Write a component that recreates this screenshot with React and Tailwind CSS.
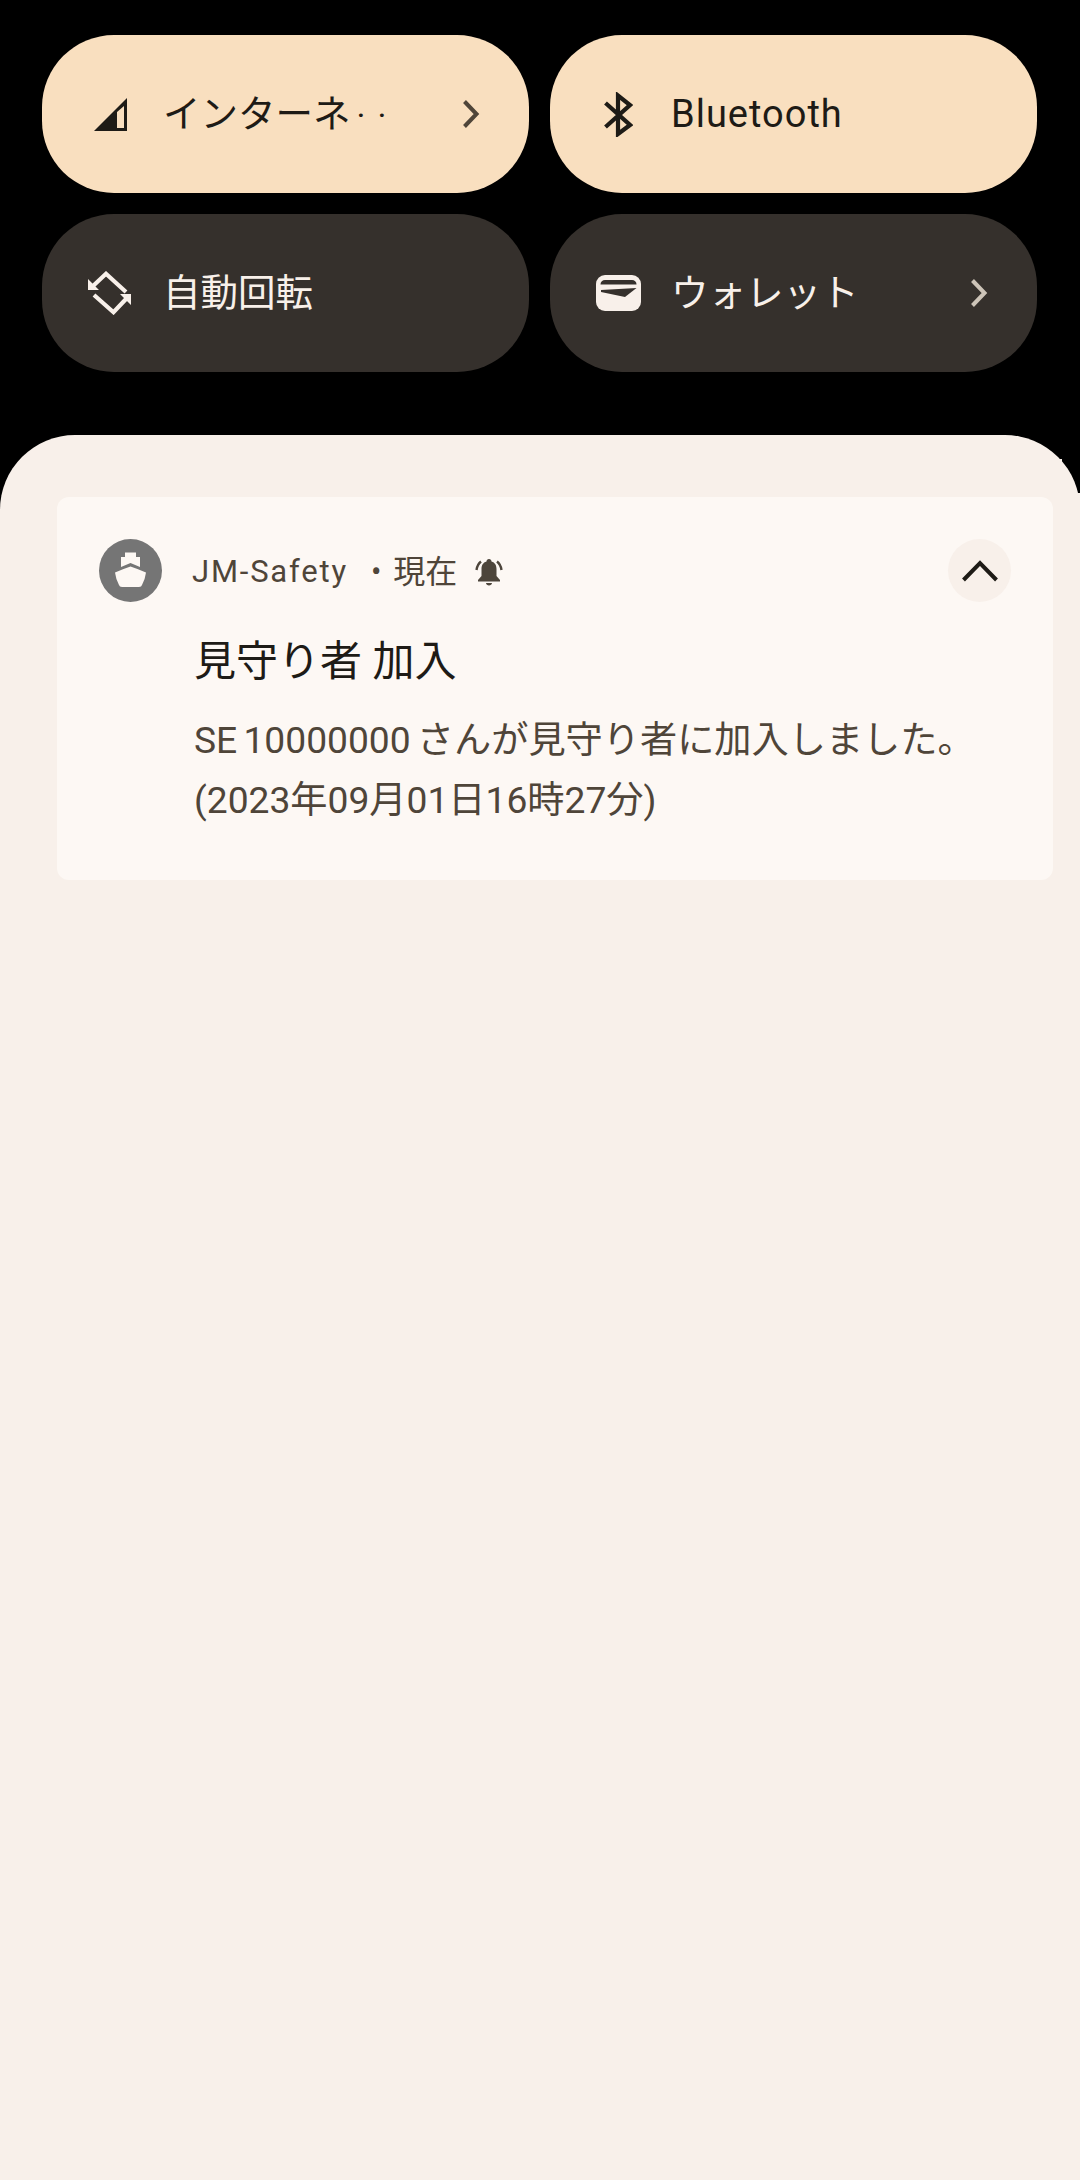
const Chevron = ({ color }) => (
  <svg width="18" height="28" viewBox="0 0 18 28" className="shrink-0" fill="none" stroke={color} strokeWidth="4">
    <path d="M2.5 1.5 L14.5 14 L2.5 26.5" />
  </svg>
);

const IconBox = ({ children }) => (
  <div className="w-[60px] shrink-0 flex items-center justify-center">{children}</div>
);

const Signal = () => (
  <svg width="33" height="33" viewBox="0 0 33 33">
    <path fillRule="evenodd" fill="#1e1b16" d="M0 33 L33 0 V33 Z M23 14 V30 H30 V8 Z" />
  </svg>
);

const Bluetooth = () => (
  <svg width="29" height="45" viewBox="0 0 29 45" fill="none" stroke="#1e1b16" strokeWidth="4.2">
    <path d="M1.5 11 L26 33 L14 42 V3.5 L26 13 L1.5 35" />
  </svg>
);

const Rotate = () => (
  <svg width="44" height="44" viewBox="0 0 44 44">
    <g fill="none" stroke="#f8f0ea" strokeWidth="4.2">
      <path d="M38 21 L18 2.800 L5 15" />
      <path d="M6 24 L25.500 41.200 L38 28" />
    </g>
    <path fill="#f8f0ea" d="M0 8 V19 H11 Z M43 23 V34 L32 23 Z" />
  </svg>
);

const Wallet = () => (
  <svg width="45" height="36" viewBox="0 0 45 36">
    <rect width="45" height="36" rx="9" fill="#f8f0ea" />
    <path fill="#35302c" d="M4.500 9.500 C4.500 6.500 6.500 5 9 5 H36 C38.500 5 40.500 6.500 40.500 9.500 Z" />
    <path fill="#35302c" d="M5 15 L40.500 13 L29 22 L5 17 Z" />
  </svg>
);

const Ship = () => (
  <svg width="63" height="63" viewBox="0 0 63 63">
    <circle cx="31.500" cy="31.500" r="31.500" fill="#757575" />
    <path fill="#fdf8f4" d="M26 13.500 H37 V18 H41 V28 L31.500 24 L22 28 V18 H26 Z" />
    <path fill="#fdf8f4" d="M16 33.500 Q24 30 31.500 27.500 Q39 30 47 33.500 Q46 41 43 46 Q42.500 48 40 48 H23 Q20.500 48 20 46 Q17 41 16 33.500 Z" />
  </svg>
);

const Bell = () => (
  <svg width="28" height="27" viewBox="0 0 28 27">
    <path fill="#4d453b" d="M14 0 C15.500 0 16.500 1 16.500 2.500 C20 3.500 21.500 6.500 21.500 10 V17 L25 21 V22.500 H3 V21 L6.500 17 V10 C6.500 6.500 8 3.500 11.500 2.500 C11.500 1 12.500 0 14 0 Z M11 24 H17 C17 25.500 15.500 26.500 14 26.500 C12.500 26.500 11 25.500 11 24 Z" />
    <g fill="none" stroke="#4d453b" strokeWidth="2.4">
      <path d="M1.500 11 C2 7.500 3.500 4.500 6 2.500" />
      <path d="M26.500 11 C26 7.500 24.500 4.500 22 2.500" />
    </g>
  </svg>
);

const Tile = ({ on, icon, children, chevron }) => (
  <div
    className={`h-[158px] rounded-[72px] flex items-center pl-[38px] pr-[49px] ${
      on ? "bg-[#f9dfbf] text-[#1e1b16]" : "bg-[#35302c] text-[#f8f0ea]"
    }`}
  >
    <IconBox>{icon}</IconBox>
    <span className="ml-[23px] flex-1 text-[37.5px] leading-[44px] whitespace-nowrap">{children}</span>
    {chevron && <Chevron color={on ? "#4f4539" : "#cdc4b8"} />}
  </div>
);

export default function App() {
  return (
    <div className="h-[2180px] w-[1080px] bg-black flex flex-col overflow-hidden font-['Roboto','Noto_Sans_CJK_JP',sans-serif]">
      <div className="grid grid-cols-2 gap-x-[21px] gap-y-[21px] pt-[35px] pl-[42px] pr-[43px]">
        <Tile on icon={<Signal />} chevron>
          インターネ<span className="tracking-[12px] ml-[6px] text-[34px]">··</span>
        </Tile>
        <Tile on icon={<Bluetooth />}>
          <span className="text-[38px] tracking-[1px]">Bluetooth</span>
        </Tile>
        <Tile icon={<Rotate />}>自動回転</Tile>
        <Tile icon={<Wallet />} chevron>ウォレット</Tile>
      </div>

      <div className="relative mt-[63px] flex-1 rounded-t-[75px] bg-[#f8f0ea] pt-[62px] pl-[57px] pr-[27px]">
        <div className="absolute top-[24px] right-[18px] w-[6px] h-[8px] bg-[#f8f0ea]" />
        <div className="absolute top-[58px] right-0 w-[4px] h-[20px] bg-[#f8f0ea]" />

        <div className="h-[383px] rounded-[12px] bg-[#fdf8f4] pt-[42px] pl-[42px] pr-[42px]">
          <div className="flex items-center h-[63px]">
            <Ship />
            <span className="ml-[30px] mt-[2px] text-[31px] leading-[40px] tracking-[1.8px] text-[#4f4539]">JM-Safety</span>
            <span className="ml-[23px] mt-[2px] text-[31px] leading-[40px] text-[#4f4539]">•</span>
            <span className="ml-[12px] mt-[2px] text-[32px] leading-[40px] text-[#4f4539]">現在</span>
            <span className="ml-[18px] mt-[4px] flex"><Bell /></span>
            <div className="ml-auto w-[63px] h-[63px] rounded-full bg-[#f8f0ea] flex items-center justify-center">
              <svg width="36" height="22" viewBox="0 0 36 22" fill="none" stroke="#1e1b16" strokeWidth="4">
                <path d="M1.500 20 L18 3 L34.500 20" />
              </svg>
            </div>
          </div>
          <div className="pl-[95px]">
            <div className="mt-[32px] text-[42px] leading-[56px] text-[#1e1b16]">見守り者 加入</div>
            <div className="mt-[20px] text-[37.2px] leading-[60px] text-[#4f4539]">
              <div className="[word-spacing:-3px]">SE 10000000 さんが見守り者に加入しました。</div>
              <div>(2023年09月01日16時27分)</div>
            </div>
          </div>
        </div>
      </div>
    </div>
  );
}
